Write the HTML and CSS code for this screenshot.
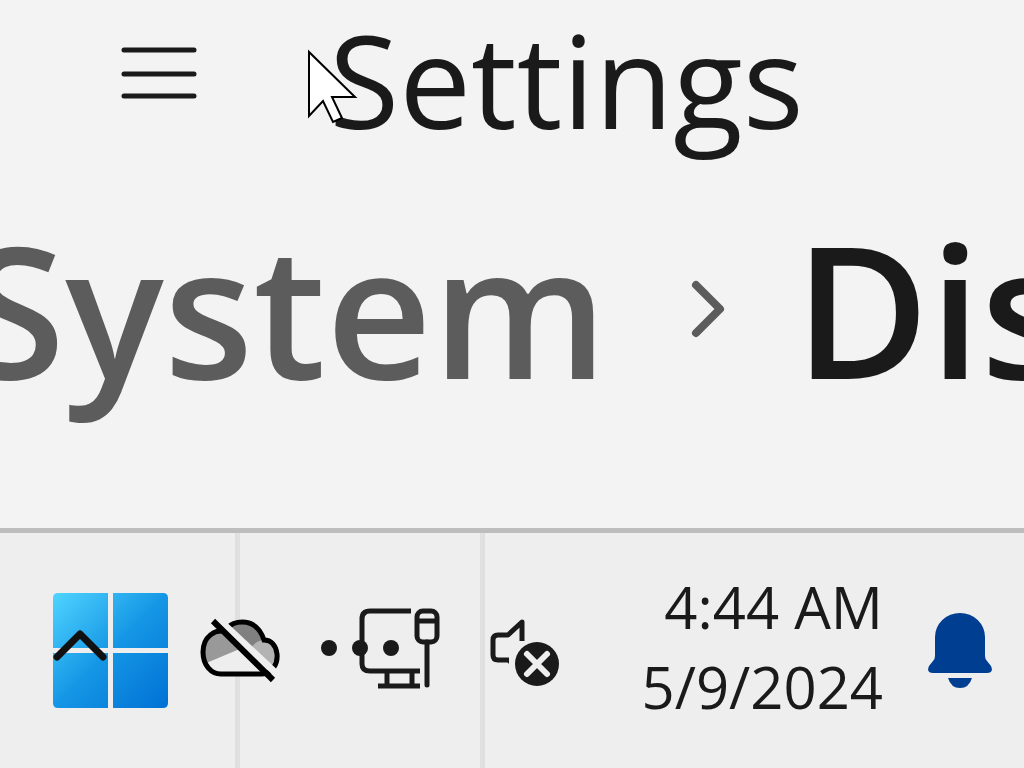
FILE: index.html
```html
<!DOCTYPE html>
<html lang="en">
<head>
    <meta charset="utf-8"/>
    <title>Settings</title>
    <link rel="stylesheet" href="styles.css">
</head>
<body>
<header class="titlebar">
    <button class="menu" type="button" aria-label="Menu">
        <svg width="76" height="54" viewBox="0 0 76 54">
            <path d="M3 4H73M3 28H73M3 50H73"/>
        </svg>
    </button>
    <h1 class="title">Settings</h1>
    <svg class="cursor" width="52" height="76" viewBox="0 0 52 76">
        <path d="M3 3V67L17 52L27 73L36 69L26 48H49Z"/>
    </svg>
</header>

<nav class="breadcrumb" aria-label="Breadcrumb">
    <a class="crumb" href="#system">System</a>
    <svg class="separator" width="34" height="58" viewBox="0 0 34 58">
        <path d="M5 5L29 29L5 53"/>
    </svg>
    <span class="crumb current">Display</span>
</nav>

<footer class="taskbar">
    <div class="start">
        <button class="start-button" type="button" aria-label="Start">
            <svg width="116" height="116" viewBox="0 0 116 116">
                <defs>
                    <linearGradient id="winfill" x1="0" y1="0" x2="116" y2="116" gradientUnits="userSpaceOnUse">
                        <stop offset="0" stop-color="#50d4ff"/>
                        <stop offset="0.5" stop-color="#1596e5"/>
                        <stop offset="1" stop-color="#0070d4"/>
                    </linearGradient>
                </defs>
                <path fill="url(#winfill)" d="M5 0H55V55H0V5Q0 0 5 0ZM60 0H110Q115 0 115 5V55H60ZM0 60H55V115H5Q0 115 0 110ZM60 60H115V110Q115 115 110 115H60Z"/>
            </svg>
        </button>
        <button class="chevron" type="button" aria-label="Show hidden icons">
            <svg width="54" height="34" viewBox="0 0 54 34">
                <path d="M4 28L27 5L50 28"/>
            </svg>
        </button>
    </div>

    <button class="tray cloud" type="button" aria-label="OneDrive">
        <svg width="80" height="66" viewBox="0 0 80 66">
            <path fill="#eee" d="M20 57A19 19 0 0 1 20 14Q24 14 27 15Q32 4 43 4Q59 4 64 21Q78 23 78 37Q77 57 62 57Z"/>
            <path fill="#999" d="M4 46Q-1 18 20 14L27 15L42 30Z"/>
            <path fill="#808080" d="M27 14Q34 3 44 5Q59 6 63 22L51 30L42 34Z"/>
            <path fill="#b3b3b3" d="M51 30Q56 22 65 22Q77 24 77 37Q77 46 72 49Z"/>
            <path fill="none" stroke="#000" stroke-width="5" d="M27 14C15 10 3 19 3 34C3 47 11 56 21 56H62C72 56 78 46 77 36C76 27 71 22 64 22C60 10 53 4 42 4C36 4 31 6 27 10"/>
            <path stroke="#eee" stroke-width="7" d="M17 0L80 59"/>
            <path stroke="#000" stroke-width="6" d="M13 3L73 62"/>
        </svg>
    </button>

    <button class="tray network" type="button" aria-label="Network">
        <svg width="120" height="86" viewBox="0 0 120 86">
            <g fill="none" stroke="#1a1a1a" stroke-width="5">
                <path d="M91 3H50Q42 3 42 11V56Q42 63 50 63H100M67 63V78M92 63V78"/>
                <path d="M100 78H58" stroke-linecap="butt"/>
                <rect x="97" y="3" width="20" height="31" rx="6"/>
                <path d="M97 13H117"/>
                <path stroke-linecap="round" d="M107 34V77"/>
            </g>
            <g fill="#1a1a1a">
                <circle cx="9" cy="40" r="8"/>
                <circle cx="40" cy="40" r="8"/>
                <circle cx="71" cy="40" r="8"/>
            </g>
        </svg>
    </button>

    <button class="tray volume" type="button" aria-label="Volume">
        <svg width="70" height="73" viewBox="0 -3 70 73">
            <path fill="none" stroke="#1a1a1a" stroke-width="5" stroke-linejoin="round" d="M32 24V5L18 18H8Q3 18 3 23V38Q3 43 8 43H19"/>
            <path fill="#1a1a1a" d="M14 41H19V47Z"/>
            <circle cx="47" cy="47" r="22" fill="#1a1a1a"/>
            <path stroke="#eee" stroke-width="6" stroke-linecap="round" d="M37 37L57 57M57 37L37 57"/>
        </svg>
    </button>

    <button class="clock" type="button">
        <span class="time">4:44 AM</span>
        <span class="date">5/9/2024</span>
    </button>

    <button class="tray bell" type="button" aria-label="Notifications">
        <svg width="66" height="76" viewBox="0 0 66 76">
            <path fill="#003e92" d="M8 24A25 24 0 0 1 58 24V43Q58 46 60 48L64 53Q67 60 60 60H6Q-1 60 2 53L6 48Q8 46 8 43Z"/>
            <path fill="#003e92" d="M21 65H45Q42 75 33 75Q24 75 21 65Z"/>
        </svg>
    </button>
</footer>
</body>
</html>
```
FILE: styles.css
```css
* {
    box-sizing: border-box;
}

body {
    margin: 0;
    min-height: 100vh;
    display: flex;
    flex-direction: column;
    overflow-x: hidden;
    background: #f3f3f3;
    color: #1a1a1a;
    font-family: "Open Sans", "Noto Sans", sans-serif;
}

button {
    border: 0;
    padding: 0;
    background: none;
    color: inherit;
    font: inherit;
}

svg {
    display: block;
}

/* title */
.titlebar {
    position: relative;
    display: flex;
    align-items: flex-start;
    gap: 132px;
    padding-left: 121px;
}

.menu {
    margin-top: 46px;
}

.menu path {
    stroke: #1a1a1a;
    stroke-width: 5px;
    stroke-linecap: round;
}

.title {
    margin: 0;
    font-size: 128px;
    font-weight: 400;
    line-height: 160px;
}

.cursor {
    position: absolute;
    left: 306px;
    top: 49px;
}

.cursor path {
    fill: #fff;
    stroke: #000;
    stroke-width: 2px;
}

/* breadcrumb */
.breadcrumb {
    flex: 1;
    display: flex;
    align-items: flex-start;
    margin-left: -36px;
    padding-top: 44px;
    overflow: hidden;
    font-size: 184px;
    font-weight: 600;
    line-height: 208px;
}

.crumb {
    color: #5c5c5c;
    text-decoration: none;
}

.crumb.current {
    color: #1a1a1a;
}

.separator {
    flex: none;
    margin: 76px 70px 0 83px;
}

.separator path {
    fill: none;
    stroke: #5c5c5c;
    stroke-width: 8px;
    stroke-linecap: round;
    stroke-linejoin: round;
}

/* taskbar */
.taskbar {
    display: flex;
    align-items: center;
    height: 240px;
    padding: 0 31px 0 53px;
    border-top: 5px solid #bdbdbd;
    background:
        linear-gradient(#e0e0e0, #e0e0e0) 235px 0 / 5px 100% no-repeat,
        linear-gradient(#e0e0e0, #e0e0e0) 480px 0 / 5px 100% no-repeat,
        #eee;
}

.start {
    position: relative;
    display: flex;
}

.chevron {
    position: absolute;
    left: 0;
    top: 36px;
}

.chevron path {
    fill: none;
    stroke: #111;
    stroke-width: 7px;
    stroke-linecap: round;
    stroke-linejoin: round;
}

.cloud {
    margin-left: 31px;
}

.network {
    margin-left: 40px;
}

.volume {
    margin-left: 50px;
}

.clock {
    display: flex;
    flex-direction: column;
    margin-left: auto;
    padding-bottom: 8px;
    font-size: 58px;
    line-height: 80px;
    text-align: right;
}

.bell {
    margin-left: 44px;
}
```
